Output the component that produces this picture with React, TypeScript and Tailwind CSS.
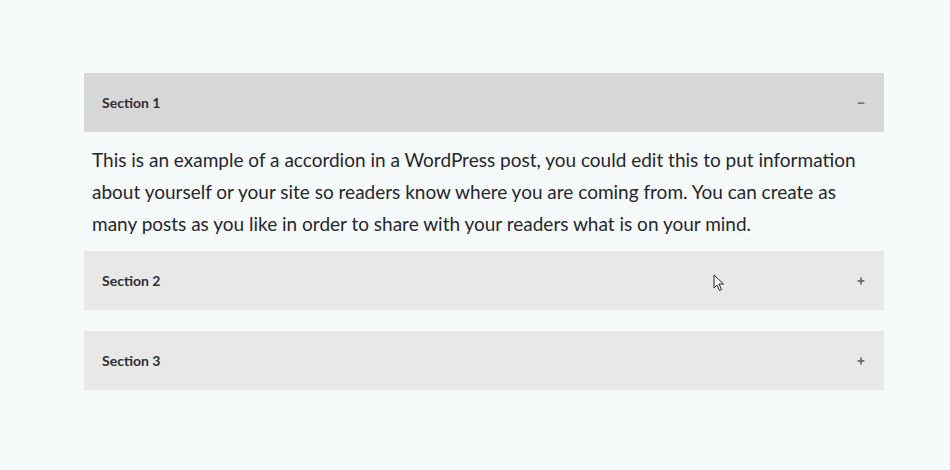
import { Minus, Plus } from "lucide-react";

const sections = [
  {
    title: "Section 1",
    open: true,
    body: "This is an example of a accordion in a WordPress post, you could edit this to put information about yourself or your site so readers know where you are coming from. You can create as many posts as you like in order to share with your readers what is on your mind.",
  },
  { title: "Section 2", open: false, body: "" },
  { title: "Section 3", open: false, body: "" },
];

export default function App() {
  return (
    <div
      className="min-h-screen w-full bg-[#f6fafb] pt-[73px] relative"
      style={{ fontFamily: "Lato, 'Open Sans', sans-serif" }}
    >
      <div className="mx-[84px] w-[800px] flex flex-col">
        {sections.map((s, i) => (
          <div key={s.title} className={i === 2 ? "mt-[21px]" : ""}>
            <div
              className={`h-[59px] flex items-center justify-between pl-[18px] pr-[18px] ${
                s.open ? "bg-[#d7d7d7]" : "bg-[#e8e8e8]"
              }`}
            >
              <span className="text-[14px] font-bold text-[#2f2f35]">{s.title}</span>
              {s.open ? (
                <Minus className="w-[10px] h-[10px] text-[#555]" strokeWidth={3} />
              ) : (
                <Plus className="w-[10px] h-[10px] text-[#555]" strokeWidth={3.5} />
              )}
            </div>
            {s.open && (
              <p className="px-[8px] pt-[12px] pb-[11px] text-[19px] leading-[32px] text-[#26262e]">
                {s.body}
              </p>
            )}
          </div>
        ))}
      </div>
      {/* mouse cursor */}
      <svg className="absolute left-[713px] top-[274px]" width="12" height="18" viewBox="0 0 12 18">
        <path d="M1 1 L1 14 L4 11 L6.5 16.5 L8.5 15.5 L6 10 L10.5 10 Z" fill="#fff" stroke="#222" strokeWidth="1" />
      </svg>
    </div>
  );
}
